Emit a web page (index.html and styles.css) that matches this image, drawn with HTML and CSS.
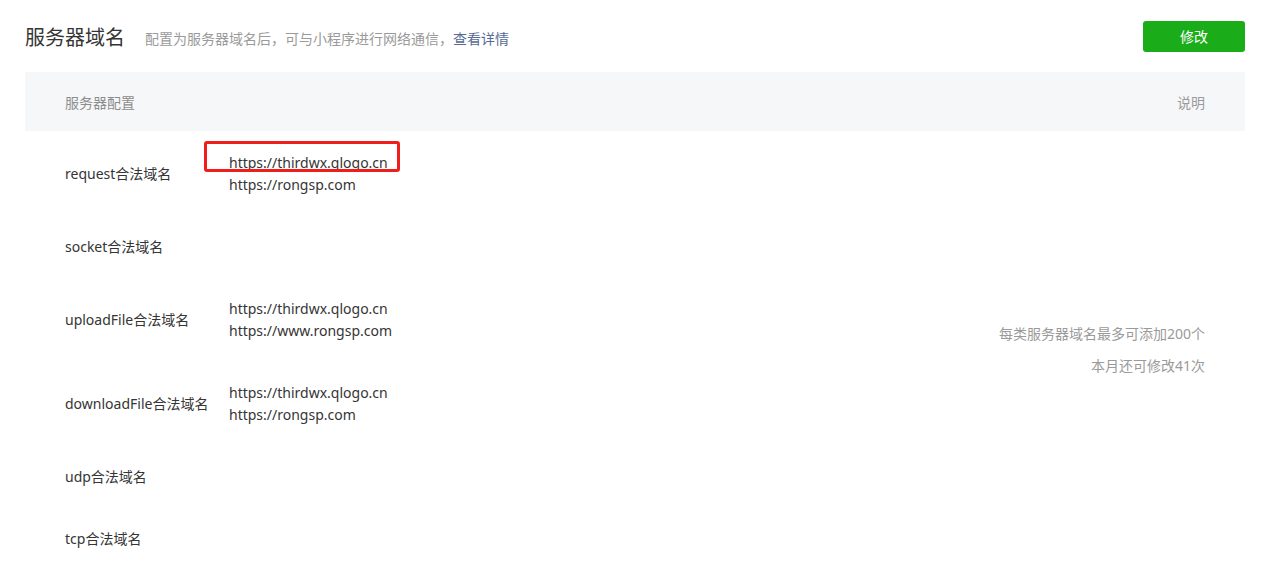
FILE: index.html
```html
<!DOCTYPE html>
<html lang="zh-CN">
<head>
    <meta charset="UTF-8">
    <meta name="viewport" content="width=device-width, initial-scale=1.0">
    <title>服务器域名</title>
    <link rel="stylesheet" href="styles.css">
</head>
<body>
    <div class="page">
        <div class="head">
            <div class="head-title">
                <h2>服务器域名</h2>
                <span class="desc">配置为服务器域名后，可与小程序进行网络通信，<a href="#">查看详情</a></span>
            </div>
            <button>修改</button>
        </div>

        <table class="domains">
            <thead>
                <tr>
                    <th class="col-name">服务器配置</th>
                    <th></th>
                    <th class="col-note">说明</th>
                </tr>
            </thead>
            <tbody>
                <tr>
                    <td class="col-name">request合法域名</td>
                    <td class="urls">
                        <div class="url marked">https://thirdwx.qlogo.cn</div>
                        <div class="url">https://rongsp.com</div>
                    </td>
                    <td class="col-note" rowspan="6">
                        <p>每类服务器域名最多可添加200个</p>
                        <p>本月还可修改41次</p>
                    </td>
                </tr>
                <tr>
                    <td class="col-name">socket合法域名</td>
                    <td class="urls"></td>
                </tr>
                <tr>
                    <td class="col-name">uploadFile合法域名</td>
                    <td class="urls">
                        <div class="url">https://thirdwx.qlogo.cn</div>
                        <div class="url">https://www.rongsp.com</div>
                    </td>
                </tr>
                <tr>
                    <td class="col-name">downloadFile合法域名</td>
                    <td class="urls">
                        <div class="url">https://thirdwx.qlogo.cn</div>
                        <div class="url">https://rongsp.com</div>
                    </td>
                </tr>
                <tr>
                    <td class="col-name">udp合法域名</td>
                    <td class="urls"></td>
                </tr>
                <tr>
                    <td class="col-name">tcp合法域名</td>
                    <td class="urls"></td>
                </tr>
            </tbody>
        </table>
    </div>
</body>
</html>
```

FILE: styles.css
```css
body {
    margin: 0;
    font-family: "Noto Sans", "Noto Sans CJK SC", sans-serif;
    font-size: 14px;
    color: #353535;
    background-color: #fff;
}

.page {
    padding: 0 18px 0 25px;
}

.head {
    display: flex;
    align-items: center;
    justify-content: space-between;
    height: 72px;
}

.head-title {
    display: flex;
    align-items: center;
}

.head-title h2 {
    margin: 0;
    font-size: 20px;
    font-weight: normal;
    color: #353535;
}

.desc {
    margin-left: 20px;
    padding-top: 3px;
    color: #9a9a9a;
}

.desc a {
    color: #576b95;
    text-decoration: none;
}

button {
    width: 102px;
    height: 31px;
    border: none;
    border-radius: 3px;
    background-color: #1aad19;
    color: #fff;
    font-family: inherit;
    font-size: 14px;
    cursor: pointer;
}

.domains {
    width: 100%;
    border-collapse: collapse;
}

.domains th {
    height: 59px;
    padding: 0;
    background-color: #f6f7f9;
    color: #8d8d8d;
    font-weight: normal;
    text-align: left;
}

.domains td {
    padding: 20px 0;
    vertical-align: middle;
}

.domains .col-name {
    width: 164px;
    padding-left: 40px;
}

.domains .col-note {
    padding-right: 40px;
    text-align: right;
    color: #9a9a9a;
}

.col-note p {
    margin: 0;
    line-height: 32px;
}

.url {
    line-height: 22px;
    padding-top: 1px;
    margin-bottom: -1px;
}

.domains tbody td.col-name {
    line-height: 22px;
    padding-top: 21px;
    padding-bottom: 19px;
}

.url.marked {
    position: relative;
}

.url.marked::after {
    content: "";
    position: absolute;
    left: -25px;
    top: -10px;
    width: 190px;
    height: 25px;
    border: 3px solid #f01d1a;
    border-radius: 3px;
}
```
